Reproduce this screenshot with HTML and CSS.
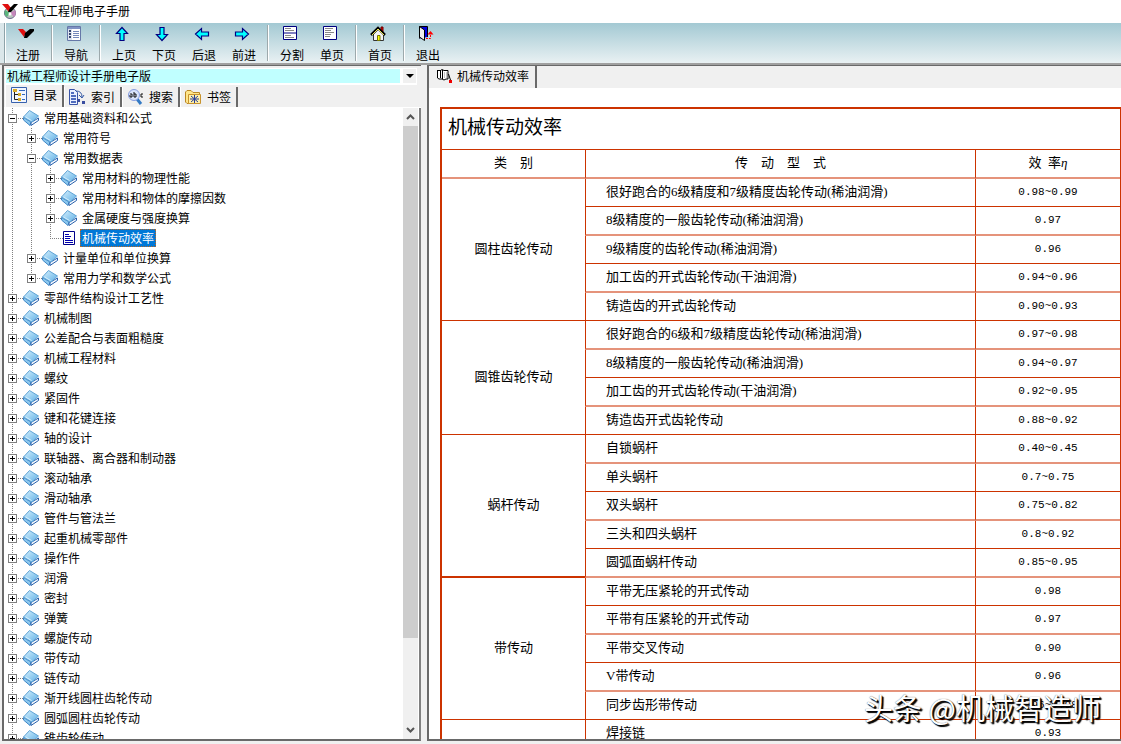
FILE: index.html
```html
<!DOCTYPE html>
<html lang="zh-CN">
<head>
<meta charset="utf-8">
<title>电气工程师电子手册</title>
<link rel="stylesheet" href="styles.css">
</head>
<body>
<svg class="sprite" aria-hidden="true">
  <defs>
    <linearGradient id="blue" x1="0" y1="0" x2="1" y2="1"><stop offset="0" stop-color="#d8f1fd"/><stop offset="1" stop-color="#5fb0e6"/></linearGradient>
  </defs>
  <symbol id="book" viewBox="0 0 16 16">
    <path d="M0.5 7.500V10L7 15.500L8 12Z" fill="#8cc8ee" stroke="#3f86c6"/>
    <path d="M8 12.500L15.500 8V10.500L8 15.500Z" fill="#f2f8ff" stroke="#2b62ab"/>
    <path d="M6.500 .5L15.500 6L9 12L0.500 7Z" fill="url(#blue)" stroke="#5fa3d4"/>
    <path d="M2.500 7L8.500 10.500" stroke="#d5effc" fill="none"/>
  </symbol>
  <symbol id="page" viewBox="0 0 12 14"><path d="M.5.5H11.500V13.500H.5Z" fill="#fff" stroke="#00008b"/><path d="M2 3.500H6M2 5.500H8M2 7.500H7M2 9.500H10M2 11.500H10" stroke="#0000b0"/></symbol>
  <symbol id="check" viewBox="0 0 16 16"><path d="M0 3H5L8 6L6 11Z" fill="#e01010"/><path d="M7 7L12 3H16V5L9 12H6Z" fill="#000"/></symbol>
  <symbol id="arrow" viewBox="0 0 16 16"><path d="M8 1.500L13.500 7.500H10V14.500H6V7.500H2.500Z" fill="#00ffff" stroke="#000080" stroke-width="1.200"/></symbol>
</svg>
<div class="window">
<header class="titlebar">
  <svg width="16" height="16" viewBox="0 0 16 16" aria-hidden="true"><circle cx="8" cy="10" r="5.500" fill="#b8c8bd" stroke="#668"/><path d="M8 10L3 7A6 6 0 0 0 5 14Z" fill="#5bb57c"/><path d="M8 10L13 7A6 6 0 0 1 12 14Z" fill="#c586ba"/><circle cx="8" cy="11" r="1.500" fill="#fff"/><path d="M0 1H6L9 5L7 9Z" fill="#e01010"/><path d="M8 5L12 1H16L9 9H6Z"/></svg>
  <span>电气工程师电子手册</span>
</header>
<nav class="toolbar" aria-label="工具栏">
  <button class="tool"><svg class="icon"><use href="#check"/></svg>注册</button>
  <span class="sep"></span>
  <button class="tool"><svg class="icon" viewBox="0 0 16 16"><path d="M1.500 .5H14.500V14.500H1.500Z" fill="#fff" stroke="#6678a8"/><path d="M2 1H14V3H2Z" fill="#7f93c4"/><path d="M2 3H6V14H2Z" fill="#dde3f0"/><path d="M3 5H5M3 8H5M3 11H5" stroke="#35466f" stroke-width="2"/><path d="M7 5.500H13M7 7.500H13M7 9.500H13M7 11.500H13" stroke="#7589bb"/></svg>导航</button>
  <span class="sep"></span>
  <button class="tool"><svg class="icon"><use href="#arrow"/></svg>上页</button>
  <button class="tool"><svg class="icon down"><use href="#arrow"/></svg>下页</button>
  <button class="tool"><svg class="icon left"><use href="#arrow"/></svg>后退</button>
  <button class="tool"><svg class="icon right"><use href="#arrow"/></svg>前进</button>
  <span class="sep"></span>
  <button class="tool"><svg class="icon" viewBox="0 0 16 16"><path d="M1.500 .5H14.500V13.500H1.500ZM1 7H15" fill="#fff" stroke="#000080"/><path d="M3 2.500H9M3 4.500H12M3 9.500H9M3 11.500H12" stroke="#888"/></svg>分割</button>
  <button class="tool"><svg class="icon" viewBox="0 0 16 16"><path d="M1.500 .5H14.500V13.500H1.500Z" fill="#fff" stroke="#000080"/><path d="M3 2.500H11M3 4.500H9M3 6.500H12M3 8.500H9M3 10.500H8" stroke="#888"/></svg>单页</button>
  <span class="sep"></span>
  <button class="tool"><svg class="icon" viewBox="0 0 16 16"><path d="M11 1H13V6H11Z" fill="#e00" stroke="#600"/><path d="M3.500 8V14.500H13.500V8L8.500 3Z" fill="#f4f4f4" stroke="#333"/><path d="M1 9L8 2L15 9" stroke="#000" stroke-width="2.500" fill="none"/><path d="M2 9L8 3L14 9" stroke="#eeea50" fill="none"/><path d="M7.500 9.500H10V14.500H7.500Z" fill="#ff0" stroke="#770"/></svg>首页</button>
  <span class="sep"></span>
  <button class="tool"><svg class="icon" viewBox="0 0 16 16"><path d="M1.500 12.500V.5H9.500V11" fill="#0000e0" stroke="#000"/><path d="M1.500 .5L6.500 4V14.500L1.500 11Z" fill="#eee" stroke="#000"/><path d="M8 12.500H12.500V7" stroke="red" fill="none" stroke-dasharray="2 1"/><path d="M9.500 8.500L12.500 5L15.500 8.500Z" fill="red"/></svg>退出</button>
</nav>
<div class="panes">
<aside class="sidebar">
  <div class="combo">
    <select aria-label="手册"><option>机械工程师设计手册电子版</option></select>
    <span class="combo-arrow"><svg width="8" height="4" viewBox="0 0 8 4"><path d="M0 0H8L4 4Z"/></svg></span>
  </div>
  <div class="tabs">
    <button class="tab active"><svg class="icon" viewBox="0 0 16 16"><path d="M.5.5H15.500V15.500H.5Z" fill="#f1f6ff" stroke="#3761ad"/><path d="M3.500 4V12.500H7M4 7.500H7" stroke="#222" fill="none"/><path d="M2 2H6V5H2ZM7 6H10V9H7ZM7 11H10V14H7Z" fill="#d8ab2a"/><path d="M8 3.500H14M11 7.500H14M11 12.500H14" stroke="#3168bd"/></svg>目录</button>
    <button class="tab"><svg class="icon" viewBox="0 0 16 16"><path d="M.5.5H5.500L8.500 3.500V15.500H.5Z" fill="#eaf0ff" stroke="#3a55a8"/><path d="M2 4H5M2 7H7M2 10H7M2 13H7" stroke="#506cbd" stroke-width="2"/><path d="M7 2Q13 2 13 8M10 6L13 9L15 6" stroke="#3257a5" fill="none"/><path d="M8 10H11V13H8ZM13 12H16V15H13Z" fill="#3a4da0"/></svg>索引</button>
    <button class="tab"><svg class="icon" viewBox="0 0 16 16"><path d="M10 10L14 15" stroke="#337ac4" stroke-width="3"/><circle cx="7" cy="6" r="5.500" fill="#d9e4fb" stroke="#869cdf"/><path d="M3 5H5V8H3V6M7 3V8H9V5H7M16 5H14V8H16" fill="none" stroke="#111"/></svg>搜索</button>
    <button class="tab"><svg class="icon" viewBox="0 0 16 16"><path d="M.5 13V3L2 1.500H6L8 3.500H14.500V13L13 14.500H2Z" fill="#ffe68b" stroke="#bb8725"/><path d="M3.500 5.500H15.500V14.500H3.500Z" fill="#fff0aa" stroke="#c8932e"/><path d="M5 10H14M9.500 6V14M6 7L13 13M13 7L6 13" stroke="#283f9c"/></svg>书签</button>
  </div>
  <div class="tree-box">
  <ul class="tree">
    <li><div class="node"><button class="exp minus" aria-label="折叠"></button><svg class="book"><use href="#book"/></svg><span>常用基础资料和公式</span></div>
      <ul>
        <li><div class="node"><button class="exp" aria-label="展开"></button><svg class="book"><use href="#book"/></svg><span>常用符号</span></div></li>
        <li><div class="node"><button class="exp minus" aria-label="折叠"></button><svg class="book"><use href="#book"/></svg><span>常用数据表</span></div>
          <ul>
            <li><div class="node"><button class="exp" aria-label="展开"></button><svg class="book"><use href="#book"/></svg><span>常用材料的物理性能</span></div></li>
            <li><div class="node"><button class="exp" aria-label="展开"></button><svg class="book"><use href="#book"/></svg><span>常用材料和物体的摩擦因数</span></div></li>
            <li><div class="node"><button class="exp" aria-label="展开"></button><svg class="book"><use href="#book"/></svg><span>金属硬度与强度换算</span></div></li>
            <li><div class="node leaf"><svg class="doc"><use href="#page"/></svg><span class="selected">机械传动效率</span></div></li>
          </ul>
        </li>
        <li><div class="node"><button class="exp" aria-label="展开"></button><svg class="book"><use href="#book"/></svg><span>计量单位和单位换算</span></div></li>
        <li><div class="node"><button class="exp" aria-label="展开"></button><svg class="book"><use href="#book"/></svg><span>常用力学和数学公式</span></div></li>
      </ul>
    </li>
    <li><div class="node"><button class="exp" aria-label="展开"></button><svg class="book"><use href="#book"/></svg><span>零部件结构设计工艺性</span></div></li>
    <li><div class="node"><button class="exp" aria-label="展开"></button><svg class="book"><use href="#book"/></svg><span>机械制图</span></div></li>
    <li><div class="node"><button class="exp" aria-label="展开"></button><svg class="book"><use href="#book"/></svg><span>公差配合与表面粗糙度</span></div></li>
    <li><div class="node"><button class="exp" aria-label="展开"></button><svg class="book"><use href="#book"/></svg><span>机械工程材料</span></div></li>
    <li><div class="node"><button class="exp" aria-label="展开"></button><svg class="book"><use href="#book"/></svg><span>螺纹</span></div></li>
    <li><div class="node"><button class="exp" aria-label="展开"></button><svg class="book"><use href="#book"/></svg><span>紧固件</span></div></li>
    <li><div class="node"><button class="exp" aria-label="展开"></button><svg class="book"><use href="#book"/></svg><span>键和花键连接</span></div></li>
    <li><div class="node"><button class="exp" aria-label="展开"></button><svg class="book"><use href="#book"/></svg><span>轴的设计</span></div></li>
    <li><div class="node"><button class="exp" aria-label="展开"></button><svg class="book"><use href="#book"/></svg><span>联轴器、离合器和制动器</span></div></li>
    <li><div class="node"><button class="exp" aria-label="展开"></button><svg class="book"><use href="#book"/></svg><span>滚动轴承</span></div></li>
    <li><div class="node"><button class="exp" aria-label="展开"></button><svg class="book"><use href="#book"/></svg><span>滑动轴承</span></div></li>
    <li><div class="node"><button class="exp" aria-label="展开"></button><svg class="book"><use href="#book"/></svg><span>管件与管法兰</span></div></li>
    <li><div class="node"><button class="exp" aria-label="展开"></button><svg class="book"><use href="#book"/></svg><span>起重机械零部件</span></div></li>
    <li><div class="node"><button class="exp" aria-label="展开"></button><svg class="book"><use href="#book"/></svg><span>操作件</span></div></li>
    <li><div class="node"><button class="exp" aria-label="展开"></button><svg class="book"><use href="#book"/></svg><span>润滑</span></div></li>
    <li><div class="node"><button class="exp" aria-label="展开"></button><svg class="book"><use href="#book"/></svg><span>密封</span></div></li>
    <li><div class="node"><button class="exp" aria-label="展开"></button><svg class="book"><use href="#book"/></svg><span>弹簧</span></div></li>
    <li><div class="node"><button class="exp" aria-label="展开"></button><svg class="book"><use href="#book"/></svg><span>螺旋传动</span></div></li>
    <li><div class="node"><button class="exp" aria-label="展开"></button><svg class="book"><use href="#book"/></svg><span>带传动</span></div></li>
    <li><div class="node"><button class="exp" aria-label="展开"></button><svg class="book"><use href="#book"/></svg><span>链传动</span></div></li>
    <li><div class="node"><button class="exp" aria-label="展开"></button><svg class="book"><use href="#book"/></svg><span>渐开线圆柱齿轮传动</span></div></li>
    <li><div class="node"><button class="exp" aria-label="展开"></button><svg class="book"><use href="#book"/></svg><span>圆弧圆柱齿轮传动</span></div></li>
    <li><div class="node"><button class="exp" aria-label="展开"></button><svg class="book"><use href="#book"/></svg><span>锥齿轮传动</span></div></li>
  </ul>
  <div class="scrollbar">
    <button aria-label="向上"><svg width="9" height="6" viewBox="0 0 9 6"><path d="M1 5L4.500 1.500L8 5"/></svg></button>
    <div class="track"><div class="thumb"></div></div>
    <button aria-label="向下"><svg width="9" height="6" viewBox="0 0 9 6"><path d="M1 1L4.500 4.500L8 1"/></svg></button>
  </div>
  </div>
</aside>
<main class="content">
  <div class="doc-tabs">
    <button class="doc-tab"><svg class="icon" viewBox="0 0 16 16"><path d="M1.500 2V10L3 11H6L8 12L10 11H12V2.500H8L6 1.500L4.500 2.500H1.500M4.500 2V10M6.500 2V11" fill="#fff" stroke="#000"/><path d="M8 5H11M8 7H11M8 9H11" stroke="#888" stroke-dasharray="1 1"/><path d="M12.500 6L14.500 12" stroke="#000"/><path d="M13 12H16V15H13Z" fill="#e00"/></svg>机械传动效率</button>
  </div>
  <div class="page">
  <table class="data">
    <colgroup><col class="kind"><col><col class="rate"></colgroup>
    <tbody>
    <tr class="title"><th colspan="3">机械传动效率</th></tr>
    <tr><th>类　别</th><th>传　动　型　式</th><th>效&nbsp;&nbsp;率<i>η</i></th></tr>
    <tr><td class="group" rowspan="5">圆柱齿轮传动</td><td>很好跑合的6级精度和7级精度齿轮传动(稀油润滑)</td><td class="num">0.98~0.99</td></tr>
    <tr><td>8级精度的一般齿轮传动(稀油润滑)</td><td class="num">0.97</td></tr>
    <tr><td>9级精度的齿轮传动(稀油润滑)</td><td class="num">0.96</td></tr>
    <tr><td>加工齿的开式齿轮传动(干油润滑)</td><td class="num">0.94~0.96</td></tr>
    <tr><td>铸造齿的开式齿轮传动</td><td class="num">0.90~0.93</td></tr>
    <tr><td class="group" rowspan="4">圆锥齿轮传动</td><td>很好跑合的6级和7级精度齿轮传动(稀油润滑)</td><td class="num">0.97~0.98</td></tr>
    <tr><td>8级精度的一般齿轮传动(稀油润滑)</td><td class="num">0.94~0.97</td></tr>
    <tr><td>加工齿的开式齿轮传动(干油润滑)</td><td class="num">0.92~0.95</td></tr>
    <tr><td>铸造齿开式齿轮传动</td><td class="num">0.88~0.92</td></tr>
    <tr><td class="group thick" rowspan="5">蜗杆传动</td><td>自锁蜗杆</td><td class="num">0.40~0.45</td></tr>
    <tr><td>单头蜗杆</td><td class="num">0.7~0.75</td></tr>
    <tr><td>双头蜗杆</td><td class="num">0.75~0.82</td></tr>
    <tr><td>三头和四头蜗杆</td><td class="num">0.8~0.92</td></tr>
    <tr><td>圆弧面蜗杆传动</td><td class="num">0.85~0.95</td></tr>
    <tr><td class="group" rowspan="5">带传动</td><td>平带无压紧轮的开式传动</td><td class="num">0.98</td></tr>
    <tr><td>平带有压紧轮的开式传动</td><td class="num">0.97</td></tr>
    <tr><td>平带交叉传动</td><td class="num">0.90</td></tr>
    <tr><td>V带传动</td><td class="num">0.96</td></tr>
    <tr><td>同步齿形带传动</td><td class="num">0.96~0.98</td></tr>
    <tr><td class="group"></td><td>焊接链</td><td class="num">0.93</td></tr>
    </tbody>
  </table>
  </div>
</main>
</div>
<div class="watermark">头条 @机械智造师</div>
</div>
</body>
</html>
```
FILE: styles.css
```css
* { box-sizing: border-box; }
body {
  margin: 0;
  background: #f0f0f0;
  color: #000;
  font: 12px/16px "Noto Sans CJK SC", sans-serif;
}
button, select { font: inherit; color: inherit; padding: 0; border: 0; margin: 0; background: none; }
ul { list-style: none; margin: 0; padding: 0; }
.sprite { position: absolute; width: 0; height: 0; }
.icon { display: block; width: 16px; height: 16px; flex: none; }
.window { position: relative; display: flex; flex-direction: column; height: 100vh; overflow: hidden; padding-bottom: 3px; }

.titlebar { display: flex; align-items: center; gap: 4px; height: 23px; padding: 0 0 1px 2px; background: #fff; flex: none; }

.toolbar {
  display: flex;
  flex: none;
  height: 40px;
  padding-left: 8px;
  background: linear-gradient(#a3c9d3, #e9f1f3);
  box-shadow: inset 4px 0 #dbe7ea, inset 5px 0 #8ea3a9, inset 6px 0 #fff;
}
.tool { display: flex; flex-direction: column; align-items: center; gap: 5px; width: 40px; padding-top: 3px; }
.tool .icon { margin-right: 4px; }
.sep { width: 2px; margin: 2px 3px; background: #9da9ac; border-right: 1px solid #fff; }
.down { transform: rotate(180deg); }
.left { transform: rotate(-90deg); }
.right { transform: rotate(90deg); }

.panes { flex: 1; min-height: 0; display: grid; grid-template-columns: 419px minmax(0, 1fr); column-gap: 6px; padding-left: 2px; border-top: 2px solid #a0a0a0; }
.sidebar { display: flex; flex-direction: column; min-height: 0; border: 1px solid #696969; border-width: 1px 0 0 2px; }
.combo { display: flex; gap: 3px; margin: 2px 4px 1px 1px; padding: 1px; background: #fff; border-bottom: 1px solid #fff; }
.combo select { flex: 1; height: 14px; line-height: 14px; padding-left: 1px; background: #c0ffff; appearance: none; border-radius: 0; }
.combo-arrow { display: flex; align-items: center; justify-content: center; width: 13px; background: #f0f0f0; }

.tabs { display: flex; align-items: flex-end; height: 22px; padding-left: 1px; flex: none; border-bottom: 1px solid #fff; }
.tab { display: flex; align-items: center; gap: 6px; height: 20px; padding: 0 0 0 4px; border-left: 1px solid #fff; border-right: 2px solid #696969; width: 58px; white-space: nowrap; }
.tab.active { height: 22px; width: 59px; padding-left: 5px; padding-bottom: 2px; }

.tree-box { display: flex; flex: 1; min-height: 0; background: #fff; border-right: 2px solid #808080; border-bottom: 2px solid #696969; }
.tree { flex: 1; min-width: 0; overflow: hidden; padding-left: 4px; }
.tree, .tree ul {
  background-image: repeating-linear-gradient(#808080 0 1px, transparent 1px 2px);
  background-repeat: no-repeat;
  background-position: 8px 0;
  background-size: 1px 100%;
}
.tree ul { margin-left: 19px; background-position: 4px 0; background-size: 1px calc(100% - 10px); }
.node { display: flex; align-items: center; height: 20px; white-space: nowrap; }
.exp {
  flex: none;
  width: 9px;
  height: 9px;
  border: 1px solid #808080;
  background: linear-gradient(#000, #000) center / 5px 1px no-repeat, linear-gradient(#000, #000) center / 1px 5px no-repeat, #fff;
}
.exp.minus { background: linear-gradient(#000, #000) center / 5px 1px no-repeat, #fff; }
.node .book { width: 22px; height: 16px; padding-left: 6px; margin-right: 5px; background: repeating-linear-gradient(90deg, transparent 0 1px, #808080 1px 2px) 0 8px / 6px 1px no-repeat; flex: none; }
.leaf::before { content: ""; width: 13px; height: 1px; margin-left: 4px; background: repeating-linear-gradient(90deg, #808080 0 1px, transparent 1px 2px); }
.doc { width: 12px; height: 14px; margin-right: 5px; }
.selected { padding: 0 2px; height: 18px; line-height: 18px; background: #0078d7; color: #fff; outline: 1px dotted #c06820; outline-offset: -1px; }

.scrollbar { display: flex; flex-direction: column; flex: none; width: 15px; background: #f0f0f0; margin-right: 1px; }
.scrollbar button { display: flex; align-items: center; justify-content: center; height: 18px; }
.scrollbar path { fill: none; stroke: #555; stroke-width: 2; }
.track { flex: 1; }
.thumb { height: 86%; background: #cdcdcd; }

.content { display: flex; flex-direction: column; min-height: 0; border: solid #696969; border-width: 1px 0 2px 2px; }
.doc-tabs { height: 24px; flex: none; padding-left: 1px; border-bottom: 2px solid #fff; }
.doc-tab { display: flex; align-items: center; gap: 5px; height: 22px; padding: 0 6px 2px; border-right: 2px solid #696969; }
.page { flex: 1; min-height: 0; overflow: hidden; background: #fff; padding: 17px 0 0 11px; }

.data { width: 100%; table-layout: fixed; border-spacing: 0; border: solid #cc3300; border-width: 2px 1px 0 2px; font-size: 13px; font-family: "Liberation Serif", "Noto Sans CJK SC", serif; }
.kind { width: 143px; }
.rate { width: 145px; }
.data th, .data td { padding: 0 0 2px; height: 28px; line-height: 16px; border: 0 solid #cc3300; border-bottom-width: 1px; font-weight: 400; }
.data td { padding-left: 20px; }
.data tr:nth-child(even) > * { height: 29px; border-bottom: 2px solid #e5937b; }
.data th + th, .data td + td, .data td:not(.group) { border-left: 1px solid #cc3300; }
.data tr > .group { padding: 0 0 2px; text-align: center; border-bottom: 1px solid #cc3300; }
.data tr > .thick { border-bottom-width: 2px; }
.data .num { padding: 0 0 2px; text-align: center; font: 11px/16px "Liberation Mono", monospace; }
.data .title th { height: 41px; padding-left: 6px; text-align: left; font-size: 19px; line-height: 28px; }

.watermark { position: absolute; right: 20px; bottom: 19px; font-size: 29px; line-height: 36px; color: #fff; text-shadow: 1px 1px 1px #000, 2px 2px 1px #000, 0 0 1px #555; }
```
